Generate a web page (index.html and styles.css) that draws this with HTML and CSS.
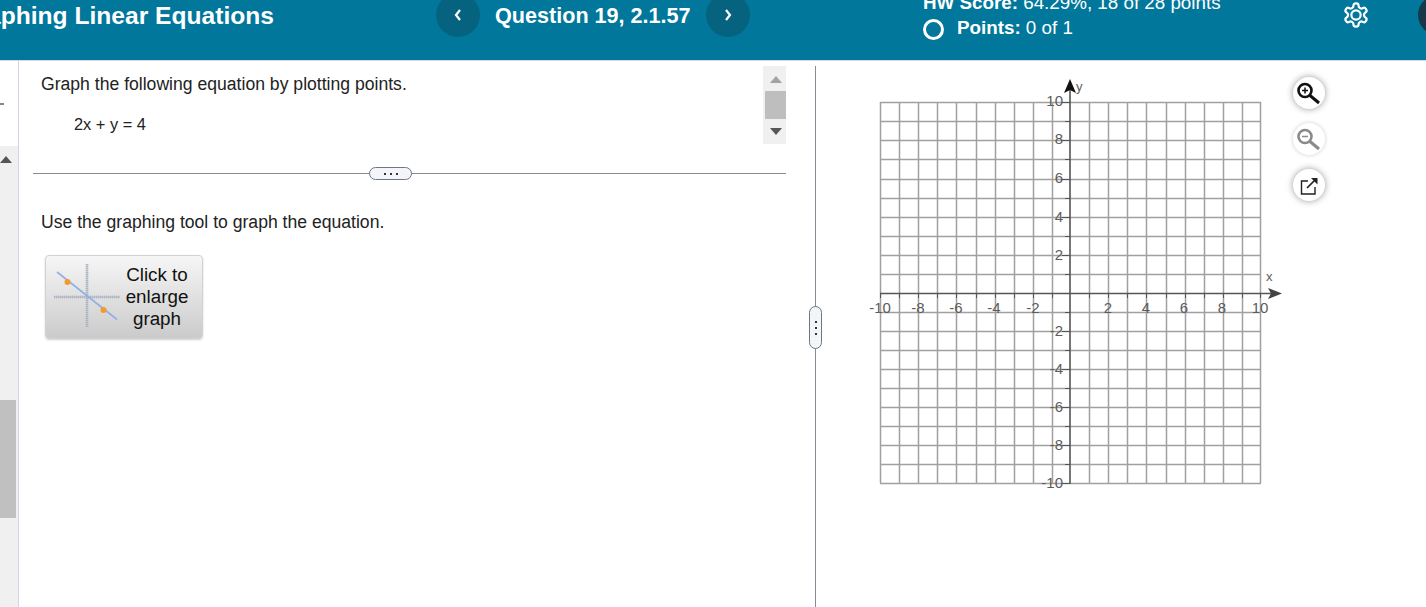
FILE: index.html
```html
<!DOCTYPE html>
<html lang="en">
<head>
    <meta charset="UTF-8">
    <meta name="viewport" content="width=device-width, initial-scale=1.0">
    <title>Question 19, 2.1.57</title>
    <link rel="stylesheet" href="styles.css">
</head>
<body>
    <header class="top-bar">
        <h1 class="hw-title"><span>Graphing Linear Equations</span></h1>
        <button class="nav-btn prev-btn" aria-label="Previous question">
            <svg width="10" height="14" viewBox="0 0 10 14"><path d="M7 2 L3 7 L7 12" fill="none" stroke="#fff" stroke-width="2.2"/></svg>
        </button>
        <div class="question-name">Question 19, 2.1.57</div>
        <button class="nav-btn" aria-label="Next question">
            <svg width="10" height="14" viewBox="0 0 10 14"><path d="M3 2 L7 7 L3 12" fill="none" stroke="#fff" stroke-width="2.2"/></svg>
        </button>
        <div class="score">
            <div class="score-line"><b>HW Score:</b> 64.29%, 18 of 28 points</div>
            <div class="points-line">
                <span class="ring"></span>
                <span><b>Points:</b> 0 of 1</span>
            </div>
        </div>
        <svg class="gear" width="28" height="28" viewBox="0 0 24 24" fill="none" stroke="#fff" stroke-width="1.9">
            <path d="M12.22 2h-.44a2 2 0 0 0-2 2v.18a2 2 0 0 1-1 1.73l-.43.25a2 2 0 0 1-2 0l-.15-.08a2 2 0 0 0-2.73.73l-.22.38a2 2 0 0 0 .73 2.73l.15.1a2 2 0 0 1 1 1.72v.51a2 2 0 0 1-1 1.74l-.15.09a2 2 0 0 0-.73 2.73l.22.38a2 2 0 0 0 2.73.73l.15-.08a2 2 0 0 1 2 0l.43.25a2 2 0 0 1 1 1.73V20a2 2 0 0 0 2 2h.44a2 2 0 0 0 2-2v-.18a2 2 0 0 1 1-1.73l.43-.25a2 2 0 0 1 2 0l.15.08a2 2 0 0 0 2.73-.73l.22-.39a2 2 0 0 0-.73-2.73l-.15-.08a2 2 0 0 1-1-1.74v-.5a2 2 0 0 1 1-1.74l.15-.09a2 2 0 0 0 .73-2.73l-.22-.38a2 2 0 0 0-2.73-.73l-.15.08a2 2 0 0 1-2 0l-.43-.25a2 2 0 0 1-1-1.73V4a2 2 0 0 0-2-2z"/>
            <circle cx="12" cy="12" r="4"/>
        </svg>
        <div class="avatar"></div>
    </header>

    <main class="content">
        <aside class="side-list">
            <div class="side-head"><span class="side-dash"></span></div>
            <div class="side-track">
                <span class="arrow-up dark"></span>
                <div class="side-thumb"></div>
            </div>
        </aside>

        <section class="question-pane">
            <div class="statement">
                <div class="statement-text">
                    <p class="prompt">Graph the following equation by plotting points.</p>
                    <p class="equation">2x + y = 4</p>
                </div>
                <div class="mini-scroll">
                    <span class="arrow-up"></span>
                    <div class="mini-thumb"></div>
                    <span class="arrow-down"></span>
                </div>
            </div>
            <div class="separator">
                <div class="sep-handle"><i></i><i></i><i></i></div>
            </div>
            <p class="prompt instruction">Use the graphing tool to graph the equation.</p>
            <button class="enlarge-btn">
                <svg width="72" height="68" viewBox="0 0 72 68">
                    <path d="M5 34 H71 M38 1 V64" stroke="#b3bac6" stroke-width="3" stroke-dasharray="1 1" fill="none"/>
                    <path d="M5 34 H71 M38 1 V64" stroke="#a9b2bf" stroke-width="1" fill="none"/>
                    <path d="M8 9 L68 56.5" stroke="#8fb1e3" stroke-width="1.6"/>
                    <circle cx="18.5" cy="19" r="3" fill="#f49a2c"/>
                    <circle cx="54.5" cy="47" r="3" fill="#f49a2c"/>
                </svg>
                <span>Click to<br>enlarge<br>graph</span>
            </button>
        </section>

        <section class="graph-pane">
            <div class="pane-handle"><i></i><i></i><i></i></div>
            <!-- viewBox uses the page coordinates of the reference, so the numbers are easy to check -->
            <svg class="graph" width="430" height="430" viewBox="860 70 430 430">
                <path class="grid-lines" d="M880.5 102V483M899.5 102V483M918.5 102V483M937.5 102V483M956.5 102V483M976.5 102V483M995.5 102V483M1014.5 102V483M1033.5 102V483M1052.5 102V483M1089.5 102V483M1108.5 102V483M1127.5 102V483M1146.5 102V483M1166.5 102V483M1185.5 102V483M1204.5 102V483M1223.5 102V483M1242.5 102V483M1260.5 102V483
                    M880 102.5H1261M880 121.5H1261M880 140.5H1261M880 159.5H1261M880 179.5H1261M880 198.5H1261M880 217.5H1261M880 236.5H1261M880 255.5H1261M880 274.5H1261M880 312.5H1261M880 331.5H1261M880 350.5H1261M880 369.5H1261M880 388.5H1261M880 407.5H1261M880 426.5H1261M880 445.5H1261M880 464.5H1261M880 483.5H1261"/>
                <path class="ticks" d="M1062 102.5H1070M1065 121.5H1070M1062 140.5H1070M1065 159.5H1070M1062 179.5H1070M1065 198.5H1070M1062 217.5H1070M1065 236.5H1070M1062 255.5H1070M1065 274.5H1070M1065 312.5H1070M1062 331.5H1070M1065 350.5H1070M1062 369.5H1070M1065 388.5H1070M1062 407.5H1070M1065 426.5H1070M1062 445.5H1070M1065 464.5H1070M1062 483.5H1070
                    M880.5 293V298M899.5 293V298M918.5 293V298M937.5 293V298M956.5 293V298M976.5 293V298M995.5 293V298M1014.5 293V298M1033.5 293V298M1052.5 293V298M1089.5 293V298M1108.5 293V298M1127.5 293V298M1146.5 293V298M1166.5 293V298M1185.5 293V298M1204.5 293V298M1223.5 293V298M1242.5 293V298M1260.5 293V298"/>
                <path class="axis" d="M1070 90V484M880 293.5H1272"/>
                <path class="axis-head" d="M1070 79 L1076 93 L1070 90 L1064 93 Z"/>
                <path class="axis-head x-head" d="M1282 293.5 L1268 288 L1271 293.5 L1268 299 Z"/>
                <g class="labels">
                    <text class="y-num" x="1063" y="106">10</text>
                    <text class="y-num" x="1063" y="144">8</text>
                    <text class="y-num" x="1063" y="183">6</text>
                    <text class="y-num" x="1063" y="222">4</text>
                    <text class="y-num" x="1063" y="260">2</text>
                    <text class="y-num" x="1063" y="336">-2</text>
                    <text class="y-num" x="1063" y="374">-4</text>
                    <text class="y-num" x="1063" y="412">-6</text>
                    <text class="y-num" x="1063" y="450">-8</text>
                    <text class="y-num" x="1063" y="488">-10</text>
                    <text class="x-num" x="880" y="313">-10</text>
                    <text class="x-num" x="918" y="313">-8</text>
                    <text class="x-num" x="956" y="313">-6</text>
                    <text class="x-num" x="994" y="313">-4</text>
                    <text class="x-num" x="1033" y="313">-2</text>
                    <text class="x-num" x="1108" y="313">2</text>
                    <text class="x-num" x="1146" y="313">4</text>
                    <text class="x-num" x="1184" y="313">6</text>
                    <text class="x-num" x="1222" y="313">8</text>
                    <text class="x-num" x="1260" y="313">10</text>
                    <text class="axis-name" x="1266" y="281">x</text>
                    <text class="axis-name" x="1076" y="91">y</text>
                </g>
            </svg>
            <div class="graph-tools">
                <button class="tool-btn" aria-label="Zoom in">
                    <svg width="26" height="26" viewBox="0 0 26 26" fill="none" stroke="#111">
                        <circle cx="9" cy="10.5" r="6.5" stroke-width="2.6"/>
                        <path d="M9 7.5V13.5M6 10.5H12" stroke-width="1.5"/>
                        <path d="M14 15.5L23 23" stroke-width="3"/>
                    </svg>
                </button>
                <button class="tool-btn tool-off" aria-label="Zoom out">
                    <svg width="26" height="26" viewBox="0 0 26 26" fill="none" stroke="#8a8a8a">
                        <circle cx="9" cy="10.5" r="6.5" stroke-width="2.6"/>
                        <path d="M6 10.5H12" stroke-width="1.5"/>
                        <path d="M14 15.5L23 23" stroke-width="3"/>
                    </svg>
                </button>
                <button class="tool-btn" aria-label="Open in new window">
                    <svg width="26" height="26" viewBox="0 0 26 26" fill="none" stroke="#222">
                        <path d="M12 9H5.5V22H19V15" stroke-width="1.4"/>
                        <path d="M11 16L19 8" stroke-width="1.7"/>
                        <path d="M15 6H21.5V12.5Z" fill="#222" stroke="none"/>
                    </svg>
                </button>
            </div>
        </section>
    </main>
</body>
</html>
```

FILE: styles.css
```css
/* page */
html, body {
    margin: 0;
    padding: 0;
    height: 100%;
    overflow: hidden;
}

body {
    font-family: "Liberation Sans", Arial, sans-serif;
    background-color: #fff;
    color: #222;
    display: flex;
    flex-direction: column;
}

button {
    font-family: inherit;
    padding: 0;
    border: none;
}

/* header */
.top-bar {
    height: 60px;
    flex: none;
    display: flex;
    align-items: flex-start;
    overflow: hidden;
    background-color: #00779b;
    border-bottom: 1px solid #d5dde3;
    color: #fff;
}

.hw-title {
    width: 274px;
    flex: none;
    margin: 1px 0 0;
    display: flex;
    justify-content: flex-end;
    overflow: hidden;
    font-size: 24.6px;
    line-height: 30px;
    white-space: nowrap;
}

.hw-title span {
    flex: none;
}

.nav-btn {
    width: 44px;
    height: 44px;
    flex: none;
    margin-top: -7px;
    display: flex;
    align-items: center;
    justify-content: center;
    border-radius: 50%;
    background-color: #06637f;
}

.prev-btn {
    margin-left: 162px;
}

.question-name {
    width: 226px;
    flex: none;
    margin-top: 1px;
    padding-left: 15px;
    box-sizing: border-box;
    font-size: 21.6px;
    font-weight: bold;
    line-height: 30px;
    white-space: nowrap;
}

.score {
    width: 400px;
    flex: none;
    margin: -9px 0 0 173px;
    font-size: 18.8px;
    line-height: 24px;
    white-space: nowrap;
}

.points-line {
    display: flex;
    align-items: center;
    gap: 13px;
}

.ring {
    width: 15px;
    height: 15px;
    margin-top: 4px;
    border: 3px solid #fff;
    border-radius: 50%;
}

.gear {
    flex: none;
    margin: 1px 0 0 19px;
}

.avatar {
    width: 40px;
    height: 40px;
    flex: none;
    margin: -5px 0 0 48px;
    border-radius: 50%;
    background-color: #15384a;
}

/* content */
.content {
    flex: 1;
    min-height: 0;
    display: flex;
}

.side-list {
    width: 18px;
    flex: none;
    display: flex;
    flex-direction: column;
    border-right: 1px solid #cfd6e4;
}

.side-head {
    height: 85px;
    flex: none;
}

.side-dash {
    display: block;
    width: 4px;
    height: 2px;
    margin-top: 42px;
    background-color: #888;
}

.side-track {
    flex: 1;
    background-color: #f0f0f0;
    padding-top: 10px;
}

.side-thumb {
    width: 16px;
    height: 118px;
    margin-top: 237px;
    background-color: #c0c0c0;
}

.arrow-up,
.arrow-down {
    display: block;
    width: 0;
    height: 0;
    border-left: 6px solid transparent;
    border-right: 6px solid transparent;
}

.arrow-up {
    border-bottom: 7px solid #a3a3a3;
}

.arrow-up.dark {
    border-bottom-color: #555;
}

.arrow-down {
    border-top: 7px solid #555;
}

/* question side */
.question-pane {
    width: 796px;
    flex: none;
    box-sizing: border-box;
    padding: 5px 29px 0 14px;
}

.statement {
    height: 78px;
    display: flex;
}

.statement-text {
    flex: 1;
    padding: 7px 0 0 8px;
}

.prompt {
    margin: 0;
    font-size: 17.6px;
    line-height: 22px;
}

.equation {
    margin: 18px 0 0 33px;
    font-size: 16.4px;
    line-height: 22px;
}

.mini-scroll {
    width: 23px;
    flex: none;
    display: flex;
    flex-direction: column;
    align-items: flex-end;
    background-color: #f0f0f0;
}

.mini-scroll .arrow-up {
    margin: 10px 4px 0 0;
}

.mini-thumb {
    width: 21px;
    height: 28px;
    margin-top: 8px;
    background-color: #bebebe;
}

.mini-scroll .arrow-down {
    margin: 9px 4px 0 0;
}

.separator {
    position: relative;
    height: 1px;
    margin-top: 29px;
    background-color: #868b94;
}

.sep-handle {
    position: absolute;
    left: 336px;
    top: -6px;
    width: 41px;
    height: 11px;
    display: flex;
    align-items: center;
    justify-content: center;
    gap: 4px;
    background-color: #f3f5f8;
    border: 1px solid #6d7687;
    border-radius: 7px;
}

.sep-handle i,
.pane-handle i {
    width: 2px;
    height: 2px;
    background-color: #333;
}

.instruction {
    margin: 37px 0 0 8px;
}

.enlarge-btn {
    width: 158px;
    height: 84px;
    margin: 22px 0 0 12px;
    display: flex;
    align-items: center;
    background: linear-gradient(#f6f6f6, #cbcbcb);
    border: 1px solid #d2d2d2;
    border-radius: 4px;
    box-shadow: 0 1px 2px rgba(0, 0, 0, 0.2);
    color: #111;
    font-size: 18.8px;
    line-height: 22px;
    text-align: center;
}

.enlarge-btn svg {
    flex: none;
    margin-left: 3px;
}

.enlarge-btn span {
    flex: 1;
    padding-right: 9px;
}

/* graph side */
.graph-pane {
    position: relative;
    flex: 1;
    display: flex;
    align-items: flex-start;
    margin-top: 5px;
    padding-left: 44px;
    border-left: 1px solid #868b94;
}

.pane-handle {
    position: absolute;
    left: -7px;
    top: 240px;
    width: 11px;
    height: 41px;
    display: flex;
    flex-direction: column;
    align-items: center;
    justify-content: center;
    gap: 4px;
    background-color: #f3f5f8;
    border: 1px solid #6d7687;
    border-radius: 7px;
}

.graph {
    flex: none;
    margin-top: 4px;
}

.grid-lines {
    fill: none;
    stroke: #a0a0a0;
    stroke-width: 1.5;
}

.ticks {
    fill: none;
    stroke: #555;
    stroke-width: 1;
}

.axis {
    fill: none;
    stroke: #555;
    stroke-width: 1.6;
}

.axis-head {
    fill: #111;
}

.x-head {
    fill: #444;
}

.labels text {
    font-size: 15px;
    fill: #5c5c5c;
}

.y-num {
    text-anchor: end;
}

.x-num {
    text-anchor: middle;
}

.labels .axis-name {
    font-size: 13px;
}

.graph-tools {
    margin: 11px 0 0 3px;
    display: flex;
    flex-direction: column;
    gap: 14px;
}

.tool-btn {
    width: 32px;
    height: 32px;
    display: flex;
    align-items: center;
    justify-content: center;
    border-radius: 50%;
    background-color: #fff;
    box-shadow: 0 0 7px rgba(0, 0, 0, 0.4);
}

.tool-off {
    box-shadow: 0 0 4px rgba(0, 0, 0, 0.2);
}
```
